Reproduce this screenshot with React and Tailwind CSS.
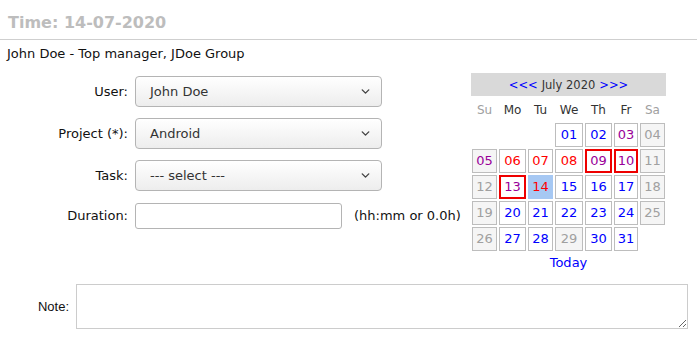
import React from 'react';
import { ChevronDown } from 'lucide-react';

const dayNames = ['Su', 'Mo', 'Tu', 'We', 'Th', 'Fr', 'Sa'];

// c: w = weekend/off, b = blue, p = purple, r = red; sel = red frame, today = blue cell
const weeks = [
  [null, null, null, { d: '01', c: 'b' }, { d: '02', c: 'b' }, { d: '03', c: 'p' }, { d: '04', c: 'w' }],
  [{ d: '05', c: 'p', off: true }, { d: '06', c: 'r' }, { d: '07', c: 'r' }, { d: '08', c: 'r' }, { d: '09', c: 'p', sel: true }, { d: '10', c: 'p', sel: true }, { d: '11', c: 'w' }],
  [{ d: '12', c: 'w' }, { d: '13', c: 'p', sel: true }, { d: '14', c: 'r', today: true }, { d: '15', c: 'b' }, { d: '16', c: 'b' }, { d: '17', c: 'b' }, { d: '18', c: 'w' }],
  [{ d: '19', c: 'w' }, { d: '20', c: 'b' }, { d: '21', c: 'b' }, { d: '22', c: 'b' }, { d: '23', c: 'b' }, { d: '24', c: 'b' }, { d: '25', c: 'w' }],
  [{ d: '26', c: 'w' }, { d: '27', c: 'b' }, { d: '28', c: 'b' }, { d: '29', c: 'w' }, { d: '30', c: 'b' }, { d: '31', c: 'b' }, null],
];

const textColor = {
  b: 'text-[#0000ff]',
  p: 'text-[#990099]',
  r: 'text-[#ff0000]',
  w: 'text-[#a0a0a0]',
};

const DayCell = ({ cell }) => {
  if (!cell) return <div />;
  let box = 'border border-[#bdbdbd] bg-white';
  if (cell.c === 'w' || cell.off) box = 'border border-[#bdbdbd] bg-[#f5f5f5]';
  if (cell.sel) box = 'border-2 border-[#ee0000] bg-white';
  if (cell.today) box = 'border border-[#a6c8f3] bg-[#a6c8f3]';
  return (
    <div className={`flex items-center justify-center ${box} ${textColor[cell.c]}`}>
      {cell.d}
    </div>
  );
};

const FakeSelect = ({ value }) => (
  <div className="flex h-[31px] w-[247px] items-center justify-between rounded-[4px] border border-[#b4b4b4] bg-gradient-to-b from-white to-[#ededed] pl-[14px] pr-[9px] text-[#333]">
    <span>{value}</span>
    <ChevronDown size={13} strokeWidth={2.6} className="text-[#444]" />
  </div>
);

const Row = ({ label, children }) => (
  <div className="flex items-center">
    <div className="w-[135px] pr-[7px] text-right text-[#111]">{label}</div>
    {children}
  </div>
);

export default function App() {
  return (
    <div className="h-[338px] w-[697px] overflow-hidden bg-white font-['DejaVu_Sans',sans-serif] text-[13px] leading-[16px] text-[#111]">
      <div className="h-[40px] border-b border-[#cfcfcf] pl-[8px] pt-[13px] text-[16px] font-bold leading-[20px] text-[#bdbdbd]">
        Time: 14-07-2020
      </div>
      <div className="mt-[6px] pl-[7px]">John Doe - Top manager, JDoe Group</div>

      <div className="mt-[11px] flex">
        <div className="flex w-[471px] flex-col gap-[11px] pt-[3px]">
          <Row label="User:">
            <FakeSelect value="John Doe" />
          </Row>
          <Row label="Project (*):">
            <FakeSelect value="Android" />
          </Row>
          <Row label="Task:">
            <FakeSelect value="--- select ---" />
          </Row>
          <div className="pt-[1px]">
            <Row label="Duration:">
              <div className="h-[26px] w-[207px] rounded-[3px] border border-[#b4b4b4] bg-white" />
              <span className="ml-[12px]">(hh:mm or 0.0h)</span>
            </Row>
          </div>
        </div>

        <div className="w-[195px]">
          <div className="flex h-[23px] items-center justify-center gap-[4px] bg-[#d9d9d9] text-[11.5px] text-[#333]">
            <span className="text-[#0000ff]">&lt;&lt;&lt;</span>
            <span>July 2020</span>
            <span className="text-[#0000ff]">&gt;&gt;&gt;</span>
          </div>
          <div className="mt-[2px] grid grid-cols-[25px_27px_25px_28px_27px_24px_25px] gap-[2px] px-[1px]">
            {dayNames.map((n, i) => (
              <div
                key={n}
                className={`flex h-[23px] items-center justify-center text-[12px] ${i === 0 || i === 6 ? 'text-[#a0a0a0]' : 'text-[#333]'}`}
              >
                {n}
              </div>
            ))}
            {weeks.flat().map((cell, i) => (
              <div key={i} className="grid h-[24px]">
                <DayCell cell={cell} />
              </div>
            ))}
          </div>
          <div className="mt-[4px] text-center text-[#0000ff]">Today</div>
        </div>
      </div>

      <div className="mt-[13px] flex items-center">
        <div className="w-[69px] text-right font-['Liberation_Sans',sans-serif] text-[13px]">Note:</div>
        <textarea className="ml-[7px] h-[45px] w-[612px] border border-[#cccccc] bg-white" />
      </div>
    </div>
  );
}
